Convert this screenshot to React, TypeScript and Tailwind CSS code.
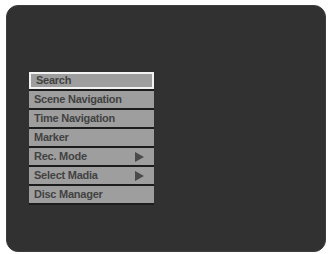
const items = [
  { label: 'Search', arrow: false },
  { label: 'Scene Navigation', arrow: false },
  { label: 'Time Navigation', arrow: false },
  { label: 'Marker', arrow: false },
  { label: 'Rec. Mode', arrow: true },
  { label: 'Select Madia', arrow: true },
  { label: 'Disc Manager', arrow: false },
];

function Arrow() {
  return (
    <svg width="9" height="10" viewBox="0 0 9 10" className="shrink-0">
      <polygon points="0,0 9,5 0,10" fill="#4a4a4a" />
    </svg>
  );
}

export default function App() {
  return (
    <div className="w-[328px] h-[254px] bg-white pt-[5px] pl-[6px] pr-[2px] pb-[2px] flex">
      <div className="flex-1 rounded-[12px] bg-[#313131] border border-[#3c3c3c] pt-[66px] pl-[22px]">
        <div className="w-[125px] flex flex-col font-['Liberation_Sans',Arial,sans-serif] font-bold text-[11px] tracking-[-0.25px] text-[#424242]">
          {items.map((item, i) => (
            <div key={item.label} className="bg-[#9e9e9e] border-b-2 border-[#1c1c1c]">
              <div
                className={`h-[17px] flex items-center justify-between pl-[5px] pr-[10px] ${
                  i === 0 ? 'border-2 border-[#f2f2f2] pl-[4px]' : ''
                }`}
              >
                <span className="leading-none">{item.label}</span>
                {item.arrow && <Arrow />}
              </div>
            </div>
          ))}
        </div>
      </div>
    </div>
  );
}
